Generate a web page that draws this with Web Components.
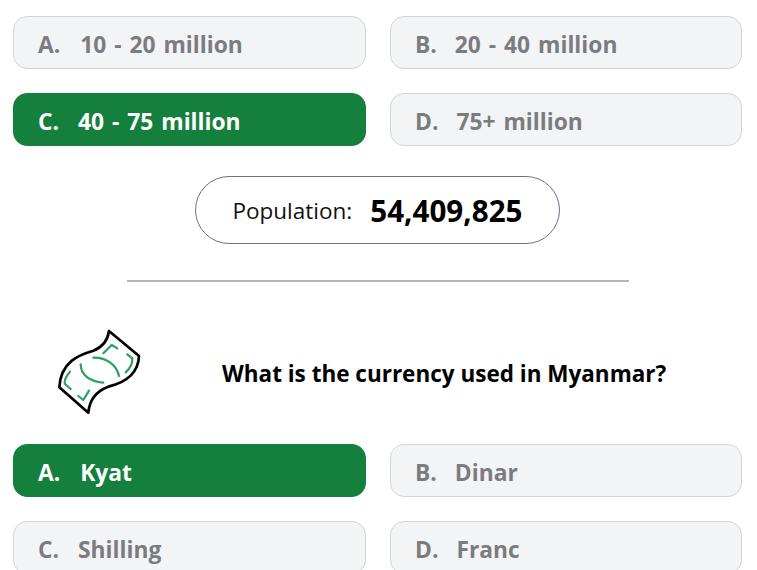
<!DOCTYPE html>
<html lang="en">
<head>
<meta charset="utf-8">
<title>Quiz</title>
<style>
  html, body { margin: 0; height: 570px; overflow: hidden; background: #fff; }
  body { font-family: "Open Sans", "Noto Sans", sans-serif; color: #000; }
</style>
</head>
<body>
<quiz-page>
  <option-grid>
    <quiz-option letter="A." gap="20">10 - 20 million</quiz-option>
    <quiz-option letter="B." gap="18">20 - 40 million</quiz-option>
    <quiz-option letter="C." gap="19" selected>40 - 75 million</quiz-option>
    <quiz-option letter="D." gap="18">75+ million</quiz-option>
  </option-grid>
  <stat-pill label="Population:">54,409,825</stat-pill>
  <section-rule></section-rule>
  <quiz-question>
    <currency-icon slot="icon"></currency-icon>
    What is the currency used in Myanmar?
  </quiz-question>
  <option-grid>
    <quiz-option letter="A." gap="20" selected>Kyat</quiz-option>
    <quiz-option letter="B." gap="18">Dinar</quiz-option>
    <quiz-option letter="C." gap="19">Shilling</quiz-option>
    <quiz-option letter="D." gap="18">Franc</quiz-option>
  </option-grid>
</quiz-page>

<script>
class QuizPage extends HTMLElement {
  constructor() {
    super();
    this.attachShadow({ mode: 'open' });
    this.shadowRoot.innerHTML = `
      <style>
        :host {
          display: flex;
          flex-direction: column;
          padding: 16px 15px 0 13px;
        }
      </style>
      <slot></slot>
    `;
  }
}

class OptionGrid extends HTMLElement {
  constructor() {
    super();
    this.attachShadow({ mode: 'open' });
    this.shadowRoot.innerHTML = `
      <style>
        :host {
          display: grid;
          grid-template-columns: 353px 352px;
          column-gap: 24px;
          row-gap: 24px;
        }
      </style>
      <slot></slot>
    `;
  }
}

class QuizOption extends HTMLElement {
  static get observedAttributes() {
    return ['letter', 'gap'];
  }

  constructor() {
    super();
    this.attachShadow({ mode: 'open' });
  }

  connectedCallback() {
    this.render();
  }

  attributeChangedCallback() {
    this.render();
  }

  render() {
    const letter = this.getAttribute('letter') || '';
    const gap = this.getAttribute('gap') || '18';

    this.shadowRoot.innerHTML = `
      <style>
        :host {
          display: flex;
          align-items: center;
          box-sizing: border-box;
          height: 53px;
          padding: 3px 24px 0;
          border: 1px solid #d1d5db;
          border-radius: 14px;
          background: #f3f4f6;
          color: #7b7c80;
          font-size: 22.8px;
          font-weight: 700;
          word-spacing: 2px;
          white-space: nowrap;
        }
        :host([selected]) {
          border-color: #15803d;
          background: #15803d;
          color: #fff;
        }
        .letter { margin-right: ${gap}px; }
      </style>
      <span class="letter">${letter}</span><slot></slot>
    `;
  }
}

class StatPill extends HTMLElement {
  constructor() {
    super();
    this.attachShadow({ mode: 'open' });
    this.shadowRoot.innerHTML = `
      <style>
        :host {
          display: flex;
          align-items: center;
          justify-content: center;
          gap: 18px;
          box-sizing: border-box;
          align-self: center;
          width: 365px;
          height: 68px;
          margin: 30px 0 0 0;
          border: 1px solid #6b7280;
          border-radius: 34px;
          white-space: nowrap;
        }
        .label { font-size: 22.5px; color: #111; }
        .value { font-size: 29.6px; font-weight: 700; }
      </style>
      <span class="label">${this.getAttribute('label') || ''}</span>
      <span class="value"><slot></slot></span>
    `;
  }
}

class SectionRule extends HTMLElement {
  constructor() {
    super();
    this.attachShadow({ mode: 'open' });
    this.shadowRoot.innerHTML = `
      <style>
        :host {
          display: block;
          align-self: center;
          width: 502px;
          height: 2px;
          margin-top: 36px;
          background: #b4b5b8;
        }
      </style>
    `;
  }
}

class QuizQuestion extends HTMLElement {
  constructor() {
    super();
    this.attachShadow({ mode: 'open' });
    this.shadowRoot.innerHTML = `
      <style>
        :host {
          display: flex;
          align-items: center;
          height: 86px;
          margin: 47px 0 29px;
          padding-left: 45px;
          font-size: 22.5px;
          font-weight: 700;
          white-space: nowrap;
        }
        .icon { display: flex; margin-right: 80px; }
        .text { padding-top: 2px; }
      </style>
      <span class="icon"><slot name="icon"></slot></span>
      <span class="text"><slot></slot></span>
    `;
  }
}

class CurrencyIcon extends HTMLElement {
  constructor() {
    super();
    this.attachShadow({ mode: 'open' });
    this.shadowRoot.innerHTML = `
      <style>
        :host { display: block; width: 84px; height: 86px; }
        svg { display: block; width: 100%; height: 100%; fill: none; stroke-linecap: round; stroke-linejoin: round; }
      </style>
      <svg viewBox="54 27 252 258">
        <path stroke="#000" stroke-width="8" fill="#fff"
          d="M207 33 C203 62 186 82 160 92 C118 104 62 125 58 202 L145 278 C148 240 165 215 205 200 C258 187 295 160 297 108 Z"/>
        <g stroke="#2a9f5e" stroke-width="6.5">
          <path d="M190 100 L215 75 L232 85"/>
          <path d="M262 103 L277 115 C278 130 270 145 257 157"/>
          <path d="M160 113 C200 112 230 135 237 168"/>
          <path d="M122 133 C122 165 150 185 190 188"/>
          <path d="M115 228 L130 240 L147 212"/>
          <path d="M90 155 C78 170 72 185 75 192 L92 207"/>
        </g>
      </svg>
    `;
  }
}

customElements.define('quiz-page', QuizPage);
customElements.define('option-grid', OptionGrid);
customElements.define('quiz-option', QuizOption);
customElements.define('stat-pill', StatPill);
customElements.define('section-rule', SectionRule);
customElements.define('quiz-question', QuizQuestion);
customElements.define('currency-icon', CurrencyIcon);
</script>
</body>
</html>
